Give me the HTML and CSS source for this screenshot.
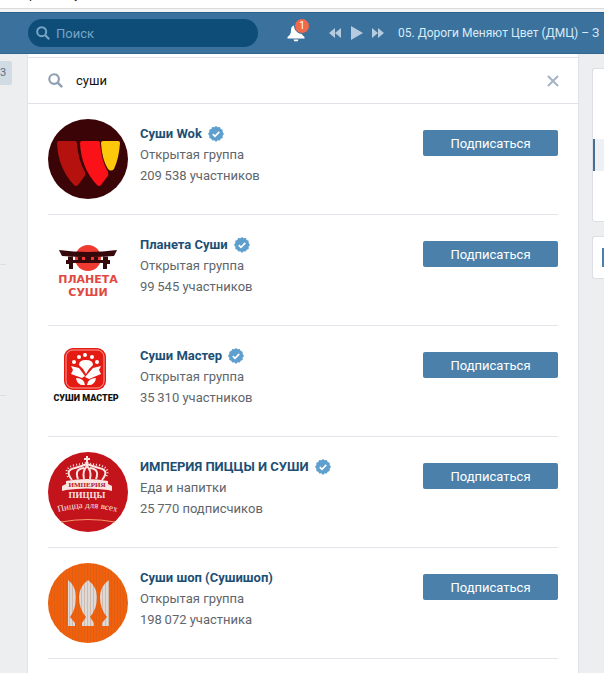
FILE: index.html
```html
<!DOCTYPE html>
<html lang="ru">
<head>
    <meta charset="UTF-8">
    <meta name="viewport" content="width=device-width, initial-scale=1.0">
    <title>Сообщества</title>
    <link rel="stylesheet" href="styles.css">
</head>
<body>
    <svg class="sprite" width="0" height="0">
        <symbol id="verified" viewBox="0 0 16 16">
            <path fill="#5e9fce" d="M8 0l1.7 1.3 2.1-.3.9 1.9 2 .8-.1 2.1L16 8l-1.4 1.7.1 2.2-2 .8-.9 1.900-2.100-.3L8 16l-1.700-1.700-2.100.3-.9-1.900-2-.8.1-2.200L0 8l1.400-2.200-.1-2.100 2-.8L4.200 1l2.100.3z"/>
            <path fill="none" stroke="#fff" stroke-width="1.700" d="M4.800 8.200l2.200 2.200 4.300-4.500"/>
        </symbol>
        <symbol id="search" viewBox="0 0 14 14">
            <circle cx="5.700" cy="5.700" r="4.500" fill="none" stroke="currentColor" stroke-width="2"/>
            <path fill="none" stroke="currentColor" stroke-width="2.200" d="M9 9l4.200 4.200"/>
        </symbol>
    </svg>

    <div class="browser-bar"><span>Товары на суши</span></div>

    <header class="top">
        <label class="top-search">
            <svg width="14" height="14"><use href="#search"/></svg>
            <input type="search" placeholder="Поиск" aria-label="Поиск">
        </label>
        <button class="bell" aria-label="Уведомления">
            <svg width="18" height="18" viewBox="0 0 18 18"><path fill="#fff" d="M9 1c-3.500 0-5 2.300-5 5.500 0 3.500-1.500 5-3.500 6.500v1.500h17V13C15.500 11.500 14 10 14 6.500 14 3.300 12.500 1 9 1zM6.500 15.500a2.500 2 0 0 0 5 0z"/></svg>
            <span class="bell-count">1</span>
        </button>
        <div class="player">
            <button aria-label="Назад"><svg width="12" height="10" viewBox="0 0 12 10"><path fill="currentColor" d="M6 0v10L0 5zM12 0v10L6 5z"/></svg></button>
            <button aria-label="Играть"><svg width="13" height="14" viewBox="0 0 13 14"><path fill="currentColor" d="M1 0l12 7-12 7z"/></svg></button>
            <button aria-label="Вперёд"><svg width="12" height="10" viewBox="0 0 12 10"><path fill="currentColor" d="M0 0l6 5-6 5zM6 0l6 5-6 5z"/></svg></button>
        </div>
        <a class="track" href="#">05. Дороги Меняют Цвет (ДМЦ) – З</a>
    </header>

    <div class="page">
        <nav class="side">
            <span class="side-count">3</span>
            <hr>
            <hr>
        </nav>

        <main class="content">
            <div class="search-row">
                <svg width="15" height="15"><use href="#search"/></svg>
                <input type="text" value="суши" aria-label="Поиск сообществ">
                <button class="clear" aria-label="Очистить"><svg width="12" height="12" viewBox="0 0 12 12"><path fill="none" stroke="currentColor" stroke-width="2" d="M1 1l10 10M11 1L1 11"/></svg></button>
            </div>

            <ul class="groups">
                <li class="group">
                    <svg class="avatar" viewBox="0 0 80 80">
                        <circle cx="40" cy="40" r="40" fill="#3b0507"/>
                        <path fill="#b5120f" d="M11 22h16q2 0 2 2 1 17 8 29 1 3-1 5l-6 8q-2 2-4 0Q10 49 9 24q0-2 2-2z"/>
                        <path fill="#fb1218" d="M34 22h16q2 0 2 2 1 17 8 29 1 3-1 5l-6 8q-2 2-4 0-16-17-17-42 0-2 2-2z"/>
                        <path fill="#fdc70c" d="M55 22h15q2 0 2 2-1 15-6 26-3 3-6 0-6-9-7-26 0-2 2-2z"/>
                    </svg>
                    <div class="info">
                        <a class="name" href="#">Суши Wok</a><svg class="check"><use href="#verified"/></svg>
                        <div>Открытая группа</div>
                        <div>209&thinsp;538 участников</div>
                    </div>
                    <button class="subscribe">Подписаться</button>
                </li>
                <li class="group">
                    <svg class="avatar" viewBox="0 0 80 80">
                        <circle cx="40" cy="28" r="13" fill="#ee3a30"/>
                        <path fill="#35090b" d="M11 20q29 4 58 0l-3 6q-26 2-52 0zM20 25h5v14h-4v-5h-3v-4h2zM55 25h5v5h2v4h-3v5h-4zM25 30h30v3H25zM30 25h4v5h-4zM46 25h4v5h-4zM37 25h6v5h-6z"/>
                        <text class="planet" x="40" y="53" text-anchor="middle">ПЛАНЕТА</text>
                        <text class="planet" x="40" y="66" text-anchor="middle">СУШИ</text>
                    </svg>
                    <div class="info">
                        <a class="name" href="#">Планета Суши</a><svg class="check"><use href="#verified"/></svg>
                        <div>Открытая группа</div>
                        <div>99&thinsp;545 участников</div>
                    </div>
                    <button class="subscribe">Подписаться</button>
                </li>
                <li class="group">
                    <svg class="avatar" viewBox="0 0 80 80">
                        <rect x="16" y="7" width="42" height="42" rx="9" fill="#e41b12"/>
                        <rect x="18" y="9" width="38" height="38" rx="7" fill="none" stroke="#f9a09a"/>
                        <g fill="#fff">
                            <circle cx="26" cy="21" r="2"/><circle cx="31" cy="16" r="2"/><circle cx="37" cy="14" r="2"/><circle cx="44" cy="16" r="2"/><circle cx="49" cy="21" r="2"/>
                            <path d="M31 24q0-5 7-5t7 5l-4 4-3 5-3-5zM23 25l8 2 6 8-3 2-11-4 2-4zM53 25l-8 2-8 9 4 2 12-5-2-4zM28 37q8 0 9 7-8 1-9-7zM48 37q-8 0-9 7 8 1 9-7z"/>
                        </g>
                        <text class="master" x="38" y="60" text-anchor="middle">СУШИ МАСТЕР</text>
                    </svg>
                    <div class="info">
                        <a class="name" href="#">Суши Мастер</a><svg class="check"><use href="#verified"/></svg>
                        <div>Открытая группа</div>
                        <div>35&thinsp;310 участников</div>
                    </div>
                    <button class="subscribe">Подписаться</button>
                </li>
                <li class="group">
                    <svg class="avatar" viewBox="0 0 80 80">
                        <circle cx="40" cy="40" r="40" fill="#c3131b"/>
                        <g fill="none" stroke="#fbe5e3" stroke-width="2">
                            <path d="M24 28q-8-10 3-12 7-2 12-4 5 2 12 4 11 2 3 12M30 27q-4-10 6-11M48 27q4-10-6-11M36 27q-2-8 3-13 5 5 3 13M39 4v9M36 7h6"/>
                            <path stroke-dasharray="1 2" d="M20 25q-5-9 7-12 12-2 12-3 1 2 12 3 12 3 7 12"/>
                        </g>
                        <path fill="#fbe5e3" d="M18 29q21-4 42 0v9q-21-3-42 0zM14 34l4-2v6l-4 1zM60 32l4 2v5l-4-1z"/>
                        <text class="ribbon" x="39" y="35" text-anchor="middle">ИМПЕРИЯ</text>
                        <text class="pizza" x="39" y="46" text-anchor="middle">ПИЦЦЫ</text>
                        <path id="motto-line" fill="none" d="M7 61q32-10 65 0"/>
                        <text class="motto"><textPath href="#motto-line" startOffset="50%" text-anchor="middle">Пицца для всех</textPath></text>
                        <path fill="none" stroke="#f39a6b" d="M13 70q27-5 54 0"/>
                    </svg>
                    <div class="info">
                        <a class="name" href="#">ИМПЕРИЯ ПИЦЦЫ И СУШИ</a><svg class="check"><use href="#verified"/></svg>
                        <div>Еда и напитки</div>
                        <div>25&thinsp;770 подписчиков</div>
                    </div>
                    <button class="subscribe">Подписаться</button>
                </li>
                <li class="group">
                    <svg class="avatar" viewBox="0 0 80 80">
                        <defs>
                            <pattern id="stripes" width="3" height="3" patternUnits="userSpaceOnUse"><path fill="#a0602f" fill-opacity=".25" d="M0 0h1v3H0z"/></pattern>
                        </defs>
                        <circle cx="40" cy="40" r="40" fill="#f2600b"/>
                        <path fill="#ded9d7" d="M20 17q8 6 8 17 0 12-6 20l5 6v3h-7zM40 17q9 7 9 17 0 12-7 20l4 6v3H34v-3l4-6q-7-8-7-20 0-10 9-17zM61 17q-9 6-9 17 0 12 7 20l-5 6v3h7z"/>
                        <circle cx="40" cy="40" r="40" fill="url(#stripes)"/>
                    </svg>
                    <div class="info">
                        <a class="name" href="#">Суши шоп (Сушишоп)</a>
                        <div>Открытая группа</div>
                        <div>198&thinsp;072 участника</div>
                    </div>
                    <button class="subscribe">Подписаться</button>
                </li>
            </ul>
        </main>

        <aside class="right">
            <div class="menu"><a class="menu-active" href="#" aria-label="Сообщества"></a></div>
            <div class="filter"><span></span></div>
        </aside>
    </div>
</body>
</html>
```

FILE: styles.css
```css
* {
    box-sizing: border-box;
}
body {
    margin: 0;
    min-height: 100vh;
    display: flex;
    flex-direction: column;
    background: #edeef0;
    color: #5f666c;
    font-family: Roboto, sans-serif;
    font-size: 13px;
}
button, input {
    border: 0;
    padding: 0;
    background: none;
    font: inherit;
    outline: 0;
}
a {
    text-decoration: none;
}
.sprite {
    position: absolute;
}
.browser-bar {
    height: 12px;
    flex-shrink: 0;
    display: flex;
    align-items: flex-end;
    background: linear-gradient(#fff 8px, #dadcde 8px, #dadcde 9px, #f2f3f4 9px);
    color: #222;
    overflow: hidden;
}
.browser-bar span {
    line-height: 20px;
    padding-bottom: 8px;
}
.top {
    height: 42px;
    flex-shrink: 0;
    display: flex;
    align-items: center;
    padding-left: 28px;
    background: #3a719d;
    border-top: 1px solid #2b618d;
    border-bottom: 1px solid #30668f;
    white-space: nowrap;
}
.top-search {
    width: 230px;
    height: 28px;
    flex-shrink: 0;
    display: flex;
    align-items: center;
    gap: 6px;
    padding: 0 8px;
    border-radius: 14px;
    background: #0e4d77;
    color: #78a5c7;
}
.top-search input {
    flex: 1;
    min-width: 0;
    color: #fff;
}
.top-search input::placeholder {
    color: #78a5c7;
}
.bell {
    position: relative;
    display: flex;
    margin-left: 29px;
}
.bell-count {
    position: absolute;
    top: -6px;
    right: -5px;
    width: 16px;
    height: 16px;
    border: 1px solid #3a719d;
    border-radius: 8px;
    background: #f0694a;
    color: #fff;
    font-size: 10px;
    line-height: 14px;
    text-align: center;
}
.player {
    display: flex;
    align-items: center;
    gap: 9px;
    margin-left: 24px;
}
.player button {
    display: flex;
    color: #b4cbe0;
}
.track {
    margin-left: 14px;
    color: #d9ecf8;
    font-size: 12px;
}
.page {
    flex: 1;
    display: flex;
}
.side {
    width: 27px;
    padding-top: 7px;
}
.side-count {
    display: block;
    width: 12px;
    height: 24px;
    border-radius: 0 2px 2px 0;
    background: #d0dbe3;
    color: #5a6f85;
    font-size: 11px;
    line-height: 24px;
}
.side hr {
    width: 6px;
    margin: 179px 0 0;
    border: 0;
    border-top: 1px solid #dcdfe2;
}
.side hr + hr {
    margin-top: 130px;
}
.content {
    flex: 1;
    padding-top: 3px;
    background: #fff;
    border: solid #dfe2e6;
    border-width: 0 1px;
}
.search-row {
    height: 47px;
    display: flex;
    align-items: center;
    padding: 0 19px 0 20px;
    border: solid #dfe2e6;
    border-width: 1px 0;
    color: #8f9fb2;
}
.search-row input {
    flex: 1;
    margin-left: 13px;
    color: #111;
}
.clear {
    display: flex;
    color: #a5b3c5;
}
.groups {
    margin: 0;
    padding: 0 20px;
    list-style: none;
}
.group {
    display: flex;
    align-items: flex-start;
    padding: 15px 0;
    border-bottom: 1px solid #e2e5e9;
}
.avatar {
    width: 80px;
    height: 80px;
    flex-shrink: 0;
}
.info {
    flex: 1;
    margin-left: 12px;
    padding-top: 4px;
    line-height: 21px;
}
.name {
    color: #1d4f74;
    font-weight: 700;
}
.check {
    width: 16px;
    height: 16px;
    margin-left: 6px;
    vertical-align: -4px;
}
.subscribe {
    width: 135px;
    height: 26px;
    margin-top: 11px;
    border-radius: 2px;
    background: #4a80aa;
    color: #fff;
}
.planet {
    fill: #e04840;
    font: bold 11px "DejaVu Sans", sans-serif;
}
.master {
    fill: #111;
    font: 900 9px Roboto, sans-serif;
}
.ribbon {
    fill: #b5131a;
    font: bold 7px "Liberation Serif", serif;
}
.pizza {
    fill: #fbe5e3;
    font: bold 9px "Liberation Serif", serif;
}
.motto {
    fill: #fbe5e3;
    font: 9px "Liberation Serif", serif;
}
.right {
    width: 12px;
    margin-left: 13px;
    padding-top: 14px;
}
.menu {
    height: 154px;
    padding-top: 70px;
    background: #fff;
    border: solid #dcdfe3;
    border-width: 1px 0 1px 1px;
    border-radius: 3px 0 0 3px;
}
.menu-active {
    display: block;
    height: 32px;
    background: #edf1f5;
    border-left: 2px solid #486f92;
}
.filter {
    height: 43px;
    margin-top: 14px;
    padding: 11px 0 11px 9px;
    background: #fff;
    border: solid #dcdfe3;
    border-width: 1px 0 1px 1px;
    border-radius: 3px 0 0 3px;
}
.filter span {
    display: block;
    height: 19px;
    background: #4a80aa;
}
```
